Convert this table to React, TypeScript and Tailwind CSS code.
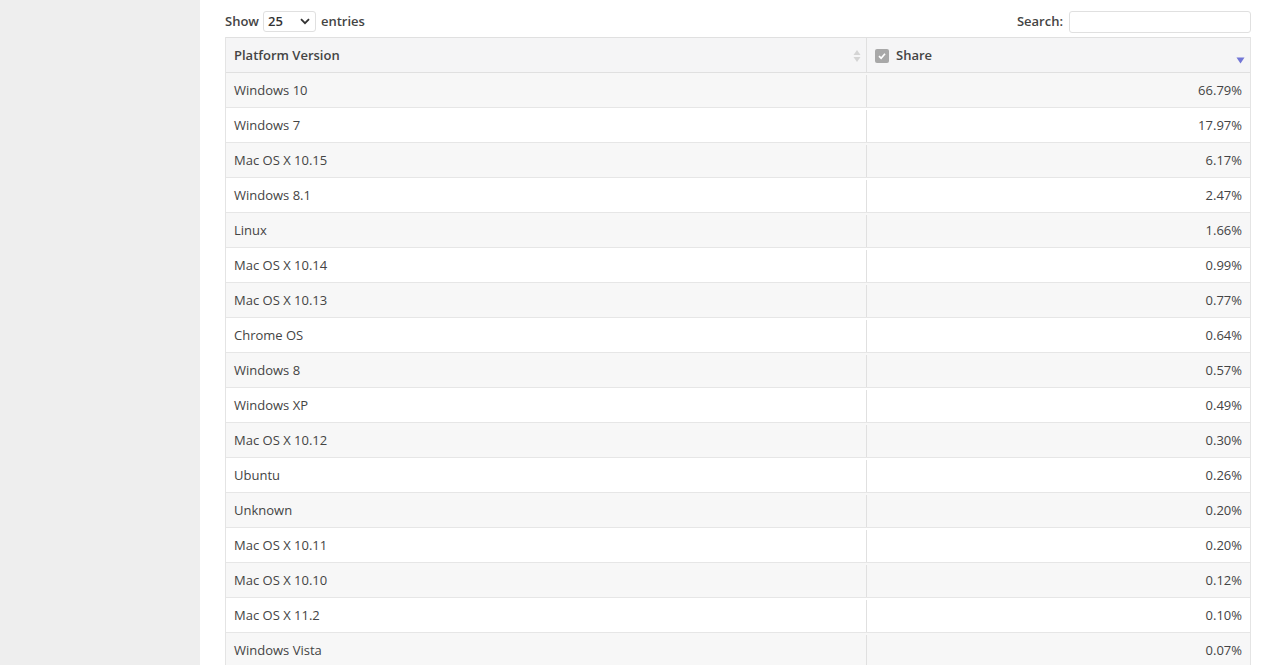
import React from "react";

const rows: [string, string][] = [
  ["Windows 10", "66.79%"],
  ["Windows 7", "17.97%"],
  ["Mac OS X 10.15", "6.17%"],
  ["Windows 8.1", "2.47%"],
  ["Linux", "1.66%"],
  ["Mac OS X 10.14", "0.99%"],
  ["Mac OS X 10.13", "0.77%"],
  ["Chrome OS", "0.64%"],
  ["Windows 8", "0.57%"],
  ["Windows XP", "0.49%"],
  ["Mac OS X 10.12", "0.30%"],
  ["Ubuntu", "0.26%"],
  ["Unknown", "0.20%"],
  ["Mac OS X 10.11", "0.20%"],
  ["Mac OS X 10.10", "0.12%"],
  ["Mac OS X 11.2", "0.10%"],
  ["Windows Vista", "0.07%"],
];

function SortBoth() {
  return (
    <svg width="8" height="14" viewBox="0 0 8 14" className="shrink-0">
      <path d="M4 1 L7.5 6 H0.5 Z" fill="#d4d4d4" />
      <path d="M4 13 L7.5 8 H0.5 Z" fill="#d4d4d4" />
    </svg>
  );
}

function SortDesc() {
  return (
    <svg width="9" height="7" viewBox="0 0 9 7" className="shrink-0">
      <path d="M0.5 0.5 H8.5 L4.5 6.5 Z" fill="#7276d6" />
    </svg>
  );
}

function CheckBox() {
  return (
    <span className="flex h-[14px] w-[14px] items-center justify-center rounded-[2px] bg-[#a8a8a8]">
      <svg width="10" height="10" viewBox="0 0 10 10">
        <path d="M2 5.2 L4.1 7.2 L8 2.8" fill="none" stroke="#fff" strokeWidth="1.7" />
      </svg>
    </span>
  );
}

export default function App() {
  return (
    <div className="flex h-[665px] overflow-hidden bg-white font-['Open_Sans',sans-serif] text-[13px] text-[#444]">
      {/* sidebar */}
      <div className="w-[200px] shrink-0 bg-[#eeeeee]" />

      <div className="flex-1 pl-[25px] pr-[23px] pt-[10px]">
        {/* controls */}
        <div className="flex h-[22px] items-center justify-between pt-[1px]">
          <div className="flex items-center gap-[4px] font-semibold">
            <span>Show</span>
            <div className="flex h-[21px] w-[53px] items-center justify-between rounded-[3px] border border-[#e0e0e0] pl-[4px] pr-[5px] text-[#333]">
              <span>25</span>
              <svg width="10" height="7" viewBox="0 0 10 7">
                <path d="M1 1.2 L5 5.2 L9 1.2" fill="none" stroke="#333" strokeWidth="1.8" />
              </svg>
            </div>
            <span className="pl-[1px]">entries</span>
          </div>
          <div className="flex items-center gap-[6px] font-semibold">
            <span>Search:</span>
            <div className="h-[22px] w-[182px] rounded-[3px] border border-[#e0e0e0]" />
          </div>
        </div>

        {/* table */}
        <div className="mt-[5px] border-l border-r border-[#e4e4e4]">
          <div className="flex h-[36px] border-b border-t border-[#e0e0e0] bg-[#f5f5f6] font-semibold">
            <div className="flex w-[641px] items-center justify-between border-r border-[#e0e0e0] pl-[8px] pr-[5px] pt-[2px]">
              <span>Platform Version</span>
              <SortBoth />
            </div>
            <div className="flex flex-1 items-center justify-between pl-[8px] pr-[5px] pt-[2px]">
              <div className="flex items-center gap-[7px]">
                <CheckBox />
                <span>Share</span>
              </div>
              <div className="self-end pb-[8px]">
                <SortDesc />
              </div>
            </div>
          </div>

          {rows.map(([name, share], i) => (
            <div
              key={name}
              className={`flex h-[35px] border-b border-[#e6e6e6] pt-[2px] ${i % 2 === 0 ? "bg-[#f7f7f7]" : "bg-white"}`}
            >
              <div className="flex w-[641px] items-center border-r border-[#e0e0e0] pl-[8px]">{name}</div>
              <div className="flex flex-1 items-center justify-end pr-[8px]">{share}</div>
            </div>
          ))}
        </div>
      </div>
    </div>
  );
}
